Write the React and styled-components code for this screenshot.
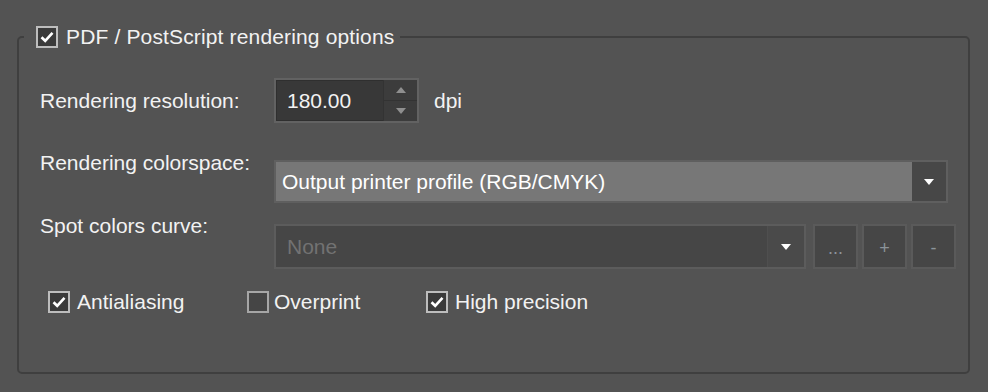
import React from "react";
import styled, { createGlobalStyle } from "styled-components";

const Global = createGlobalStyle`
  html, body {
    margin: 0;
    padding: 0;
    background: #535353;
  }
  body {
    font-family: "Liberation Sans", Arial, sans-serif;
    font-size: 21px;
    color: #f2f2f2;
  }
`;

const Check = ({ checked }) => (
  <Box $checked={checked}>
    {checked && (
      <svg width="14" height="12" viewBox="0 0 14 12">
        <path
          d="M1.5 6.2 L5.2 9.8 L12.5 1.8"
          fill="none"
          stroke="#ffffff"
          strokeWidth="2.6"
        />
      </svg>
    )}
  </Box>
);

const Arrow = ({ color = "#ffffff", up }) => (
  <svg width="10" height="6" viewBox="0 0 10 6">
    <path d={up ? "M0 6 H10 L5 0 Z" : "M0 0 H10 L5 6 Z"} fill={color} />
  </svg>
);

const App = () => {
  return (
    <Page>
      <Global />
      <Group>
        <Legend>
          <Check checked />
          <span>PDF / PostScript rendering options</span>
        </Legend>

        <Row $top={30} $align="center">
          <Label>Rendering resolution:</Label>
          <Spin>
            <SpinValue>180.00</SpinValue>
            <SpinButtons>
              <SpinBtn>
                <Arrow up color="#8f8f8f" />
              </SpinBtn>
              <SpinBtn>
                <Arrow color="#8f8f8f" />
              </SpinBtn>
            </SpinButtons>
          </Spin>
          <Unit>dpi</Unit>
        </Row>

        <Row $top={37}>
          <Label $up={-20}>Rendering colorspace:</Label>
          <Combo $width={674}>
            <ComboText>Output printer profile (RGB/CMYK)</ComboText>
            <DropBtn $width={34}>
              <Arrow />
            </DropBtn>
          </Combo>
        </Row>

        <Row $top={19}>
          <Label $up={-21}>Spot colors curve:</Label>
          <Combo $width={532} $disabled>
            <ComboText $disabled>None</ComboText>
            <DropBtn $width={36} $disabled>
              <Arrow />
            </DropBtn>
          </Combo>
          <Buttons>
            <SmallBtn>...</SmallBtn>
            <SmallBtn>+</SmallBtn>
            <SmallBtn>-</SmallBtn>
          </Buttons>
        </Row>

        <Options>
          <Option $width={199}>
            <Check checked />
            <span>Antialiasing</span>
          </Option>
          <Option $width={179} $gap={5}>
            <Check />
            <span>Overprint</span>
          </Option>
          <Option>
            <Check checked />
            <span>High precision</span>
          </Option>
        </Options>
      </Group>
    </Page>
  );
};

export default App;

const Page = styled.div`
  width: 988px;
  height: 392px;
  box-sizing: border-box;
  padding: 26px 18px 0 17px;
`;

const Group = styled.fieldset`
  margin: 0;
  height: 348px;
  box-sizing: border-box;
  border: 2px solid #3f3f3f;
  border-radius: 5px;
  padding: 0 0 0 21px;
  min-width: 0;
`;

const Legend = styled.legend`
  display: flex;
  align-items: center;
  gap: 8px;
  margin-left: -16px;
  padding: 0 6px 0 12px;
  height: 22px;
  line-height: 22px;
  letter-spacing: 0.15px;
`;

const Box = styled.span`
  width: 22px;
  height: 22px;
  box-sizing: border-box;
  border: 2px solid ${(p) => (p.$checked ? "#bdbdbd" : "#a6a6a6")};
  background: ${(p) => (p.$checked ? "#3a3a3a" : "#454545")};
  display: flex;
  align-items: center;
  justify-content: center;
  flex: none;
`;

const Row = styled.div`
  display: flex;
  align-items: ${(p) => p.$align || "flex-start"};
  margin-top: ${(p) => p.$top}px;
`;

const Label = styled.div`
  width: 234px;
  flex: none;
  position: relative;
  top: ${(p) => p.$up || 0}px;
  line-height: 45px;
`;

const Spin = styled.div`
  width: 145px;
  height: 45px;
  box-sizing: border-box;
  border: 2px solid #626262;
  box-shadow: inset 0 0 0 1px #2f2f2f;
  background: #383838;
  display: flex;
`;

const SpinValue = styled.div`
  flex: 1;
  padding-left: 11px;
  line-height: 41px;
`;

const SpinButtons = styled.div`
  width: 33px;
  display: flex;
  flex-direction: column;
  border-left: 1px solid #333;
`;

const SpinBtn = styled.div`
  flex: 1;
  display: flex;
  align-items: center;
  justify-content: center;
  background: #3c3c3c;
  & + & {
    border-top: 1px solid #333;
  }
`;

const Unit = styled.div`
  margin-left: 15px;
`;

const Combo = styled.div`
  width: ${(p) => p.$width}px;
  height: ${(p) => (p.$disabled ? 45 : 43)}px;
  box-sizing: border-box;
  border: 2px solid ${(p) => (p.$disabled ? "#5c5c5c" : "#5f5f5f")};
  background: ${(p) => (p.$disabled ? "#464646" : "#777777")};
  display: flex;
`;

const ComboText = styled.div`
  flex: 1;
  padding-left: ${(p) => (p.$disabled ? 11 : 6)}px;
  line-height: ${(p) => (p.$disabled ? 41 : 39)}px;
  color: ${(p) => (p.$disabled ? "#727272" : "#ffffff")};
`;

const DropBtn = styled.div`
  width: ${(p) => p.$width}px;
  background: ${(p) => (p.$disabled ? "#4a4a4a" : "#474747")};
  border-left: ${(p) => (p.$disabled ? "1px solid #4f4f4f" : "none")};
  display: flex;
  align-items: center;
  justify-content: center;
`;

const Buttons = styled.div`
  display: flex;
  gap: 4px;
  margin-left: 7px;
`;

const SmallBtn = styled.div`
  width: 45px;
  height: 45px;
  box-sizing: border-box;
  border: 2px solid #5a5a5a;
  background: #464646;
  color: #8c949a;
  font-size: 18px;
  display: flex;
  align-items: center;
  justify-content: center;
  padding-top: 4px;
`;

const Options = styled.div`
  display: flex;
  align-items: center;
  margin-top: 22px;
  padding-left: 8px;
`;

const Option = styled.div`
  display: flex;
  align-items: center;
  gap: ${(p) => p.$gap || 7}px;
  width: ${(p) => (p.$width ? `${p.$width}px` : "auto")};
  flex: none;
  span {
    position: relative;
    top: -1px;
  }
`;
